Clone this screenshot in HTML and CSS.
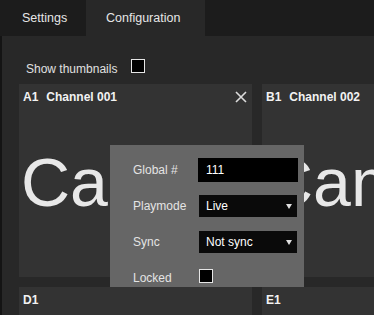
FILE: index.html
```html
<!DOCTYPE html>
<html lang="en">
<head>
    <meta charset="UTF-8">
    <meta name="viewport" content="width=device-width, initial-scale=1.0">
    <title>Configuration</title>
    <link rel="stylesheet" href="styles.css">
</head>
<body>
    <div class="tabs">
        <div class="tab tab-settings">Settings</div>
        <div class="tab tab-config active">Configuration</div>
    </div>

    <div class="content">
        <div class="options">
            <span class="option-label">Show thumbnails</span>
            <span class="checkbox"></span>
        </div>

        <div class="channels">
            <div class="channel">
                <div class="channel-header">
                    <span class="channel-id">A1</span>
                    <span class="channel-name">Channel 001</span>
                    <svg class="close" width="12" height="12" viewBox="0 0 12 12">
                        <path d="M1 1 L11 11 M11 1 L1 11" stroke="#dcdcdc" stroke-width="1.6" fill="none"/>
                    </svg>
                </div>
                <div class="channel-preview">Camera 1</div>
            </div>
            <div class="channel">
                <div class="channel-header">
                    <span class="channel-id">B1</span>
                    <span class="channel-name">Channel 002</span>
                </div>
                <div class="channel-preview">Camera 2</div>
            </div>
            <div class="channel">
                <div class="channel-header">
                    <span class="channel-id">D1</span>
                </div>
            </div>
            <div class="channel">
                <div class="channel-header">
                    <span class="channel-id">E1</span>
                </div>
            </div>
        </div>

        <!-- channel settings popup -->
        <div class="popup">
            <div class="popup-row">
                <span class="popup-label">Global #</span>
                <div class="field">111</div>
            </div>
            <div class="popup-row">
                <span class="popup-label">Playmode</span>
                <div class="field dropdown"><span>Live</span><span class="arrow"></span></div>
            </div>
            <div class="popup-row">
                <span class="popup-label">Sync</span>
                <div class="field dropdown"><span>Not sync</span><span class="arrow"></span></div>
            </div>
            <div class="popup-row">
                <span class="popup-label">Locked</span>
                <span class="checkbox popup-check"></span>
            </div>
        </div>
    </div>
</body>
</html>
```

FILE: styles.css
```css
* {
    margin: 0;
    padding: 0;
    box-sizing: border-box;
}

body {
    font-family: 'Liberation Sans', Arial, sans-serif;
    background: #282828;
    width: 374px;
    height: 315px;
    overflow: hidden;
    color: #fff;
}

.tabs {
    display: flex;
    height: 36px;
    background: #1c1c1c;
}

.tab {
    font-size: 12.5px;
    color: #e6e6e6;
    line-height: 36px;
    height: 36px;
}

.tab-settings {
    width: 86px;
    padding-left: 22px;
}

.tab-config {
    width: 119px;
    padding-left: 20px;
}

.tab.active {
    background: #282828;
}

.content {
    position: relative;
    height: 279px;
    border-left: 2px solid #141414;
    overflow: hidden;
}

.options {
    display: flex;
    align-items: flex-end;
    height: 48px;
    padding-left: 24px;
    padding-bottom: 8px;
}

.option-label {
    font-size: 12px;
    color: #e0e0e0;
    line-height: 14px;
}

.checkbox {
    display: inline-block;
    width: 14px;
    height: 14px;
    background: #000;
    border: 1px solid #e6e6e6;
}

.options .checkbox {
    margin-left: 14px;
    margin-bottom: 3px;
}

.channels {
    display: grid;
    grid-template-columns: 233px 233px;
    grid-auto-rows: 193px;
    gap: 10px;
    padding-left: 17px;
}

.channel {
    background: #333;
    overflow: hidden;
}

.channel-header {
    display: flex;
    align-items: center;
    height: 20px;
    margin-top: 3px;
    padding: 0 5px 0 4px;
    font-size: 12px;
    font-weight: bold;
    color: #f2f2f2;
}

.channel-name {
    margin-left: 8px;
}

.close {
    margin-left: auto;
}

.channel-preview {
    margin-top: 41px;
    padding-left: 2px;
    font-size: 68px;
    line-height: 68px;
    color: #e8e8e8;
    white-space: nowrap;
}

.popup {
    position: absolute;
    left: 108px;
    top: 109px;
    width: 194px;
    height: 142px;
    background: #666;
    padding: 7px 0 0 23px;
    overflow: hidden;
}

.popup-row {
    display: flex;
    align-items: center;
    height: 36px;
}

.popup-label {
    width: 65px;
    font-size: 12px;
    color: #e4e4e4;
}

.field {
    width: 100px;
    height: 24px;
    background: #000;
    font-size: 12px;
    color: #fff;
    line-height: 24px;
    padding-left: 8px;
}

.dropdown {
    display: flex;
    align-items: center;
    justify-content: space-between;
    width: 98px;
    height: 22px;
    margin-left: 1px;
    background: #0a0a0a;
    padding: 0 5px 0 7px;
}

.arrow {
    width: 0;
    height: 0;
    border-left: 3px solid transparent;
    border-right: 3px solid transparent;
    border-top: 5px solid #e0e0e0;
    margin-top: 1px;
}

.popup-check {
    margin-left: 1px;
    margin-top: -4px;
}
```
